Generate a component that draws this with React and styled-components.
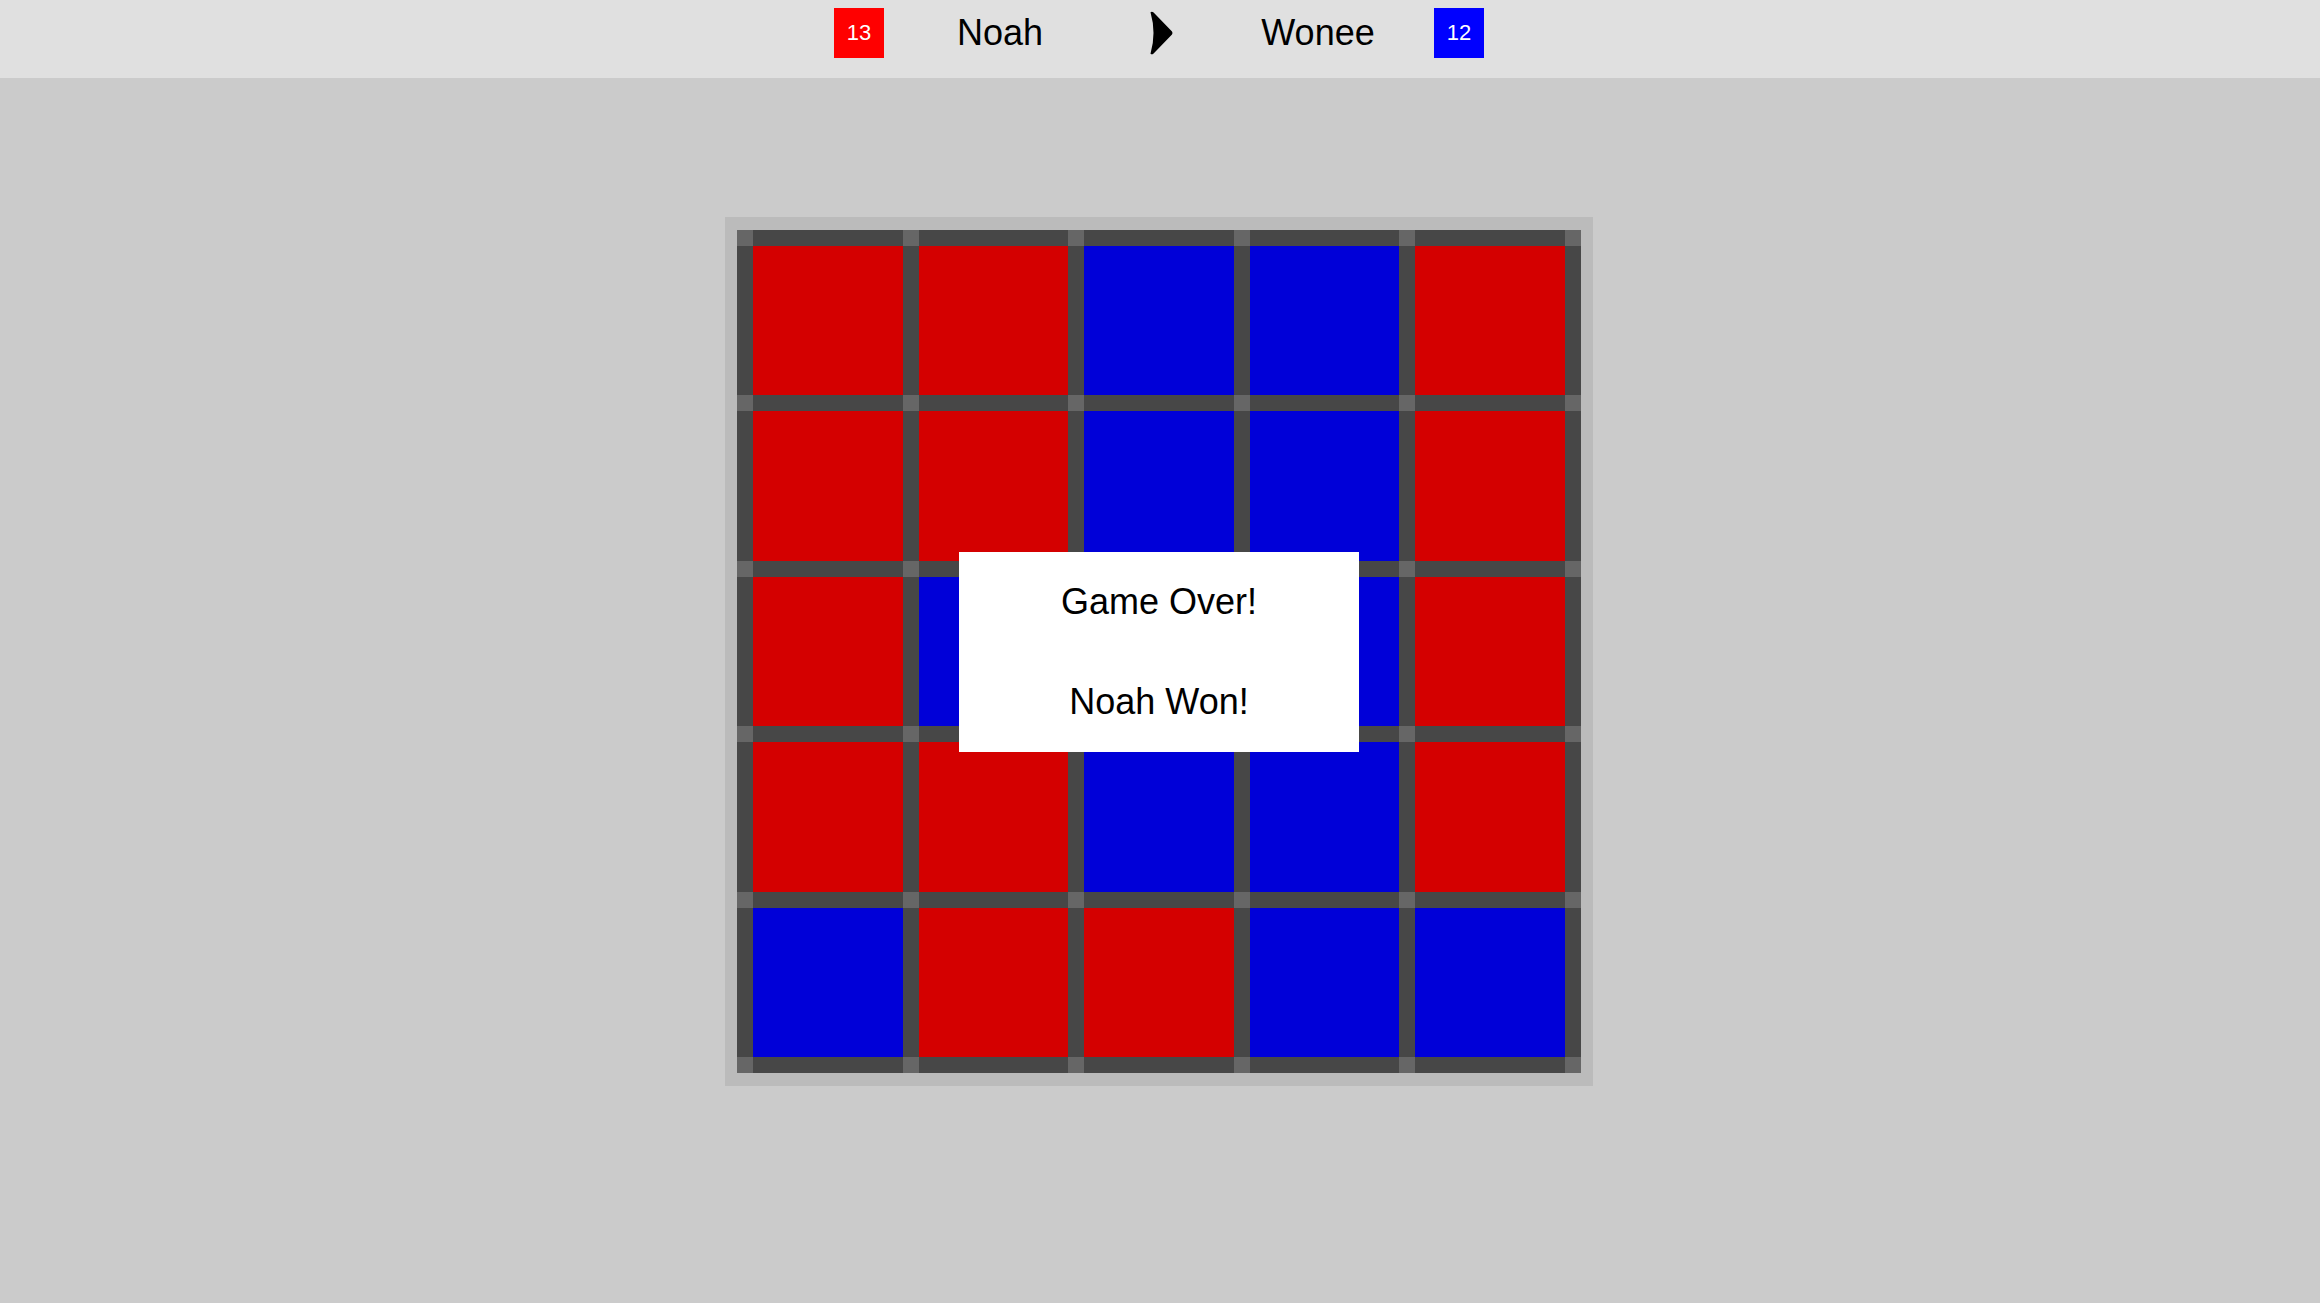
import React from "react";
import styled, { createGlobalStyle } from "styled-components";

const GlobalStyle = createGlobalStyle`
  html, body {
    margin: 0;
    padding: 0;
    background: #cbcbcb;
    font-family: "Liberation Sans", Arial, sans-serif;
    overflow: hidden;
  }
`;

const Page = styled.div`
  width: 100vw;
  height: 100vh;
  background: #cbcbcb;
`;

const Header = styled.header`
  height: 78px;
  box-sizing: border-box;
  padding: 8px 2px 0 0;
  background: #e0e0e0;
  display: flex;
  justify-content: center;
  align-items: flex-start;
`;

const Score = styled.div`
  width: 50px;
  height: 50px;
  display: flex;
  align-items: center;
  justify-content: center;
  background: ${(p) => (p.$side === "red" ? "#ff0000" : "#0000ff")};
  color: #fff;
  font-size: 22px;
`;

const Name = styled.div`
  width: 232px;
  height: 50px;
  display: flex;
  align-items: center;
  justify-content: center;
  font-size: 36px;
  color: #000;
`;

const Turn = styled.div`
  width: 86px;
  height: 50px;
  display: flex;
  align-items: center;
  justify-content: center;
  padding-left: 4px;
  box-sizing: border-box;
`;

const Main = styled.main`
  display: flex;
  justify-content: center;
  padding: 139px 2px 0 0;
`;

const Frame = styled.div`
  position: relative;
  padding: 13px 12px;
  background: #bbbbbb;
`;

const Grid = styled.div`
  width: 844px;
  height: 843px;
  display: grid;
  grid-template-columns: repeat(5, 16px 1fr) 16px;
  grid-template-rows: repeat(5, 16px 1fr) 16px;
`;

const Part = styled.div`
  background: ${(p) =>
    p.$kind === "joint"
      ? "#666666"
      : p.$kind === "line"
      ? "#474747"
      : p.$kind === "R"
      ? "#d40000"
      : "#0000d8"};
`;

const Dialog = styled.div`
  position: absolute;
  left: 50%;
  top: 50%;
  width: 400px;
  height: 200px;
  transform: translate(-50%, -50%);
  background: #fff;
  display: grid;
  grid-template-rows: 1fr 1fr;
`;

const DialogLine = styled.div`
  display: flex;
  align-items: center;
  justify-content: center;
  font-size: 36px;
  color: #000;
`;

const board = [
  "RRBBR",
  "RRBBR",
  "RBBBR",
  "RRBBR",
  "BRRBB",
];

const TurnArrow = () => (
  <svg width="24" height="44" viewBox="0 0 24 44">
    <path
      d="M1.5 1.2 Q3 0 4.6 1.6 L23 20.6 Q24 22 23 23.4 L4.6 42.4 Q3 44 1.5 42.8 Q7.5 22 1.5 1.2 Z"
      fill="#000"
    />
  </svg>
);

export default function App() {
  const parts = [];
  for (let r = 0; r < 11; r++) {
    for (let c = 0; c < 11; c++) {
      const lineRow = r % 2 === 0;
      const lineCol = c % 2 === 0;
      let kind;
      if (lineRow && lineCol) kind = "joint";
      else if (lineRow || lineCol) kind = "line";
      else kind = board[(r - 1) / 2][(c - 1) / 2];
      parts.push(<Part key={`${r}-${c}`} $kind={kind} />);
    }
  }

  return (
    <Page>
      <GlobalStyle />
      <Header>
        <Score $side="red">13</Score>
        <Name>Noah</Name>
        <Turn>
          <TurnArrow />
        </Turn>
        <Name>Wonee</Name>
        <Score $side="blue">12</Score>
      </Header>
      <Main>
        <Frame>
          <Grid>{parts}</Grid>
          <Dialog>
            <DialogLine>Game Over!</DialogLine>
            <DialogLine>Noah Won!</DialogLine>
          </Dialog>
        </Frame>
      </Main>
    </Page>
  );
}
